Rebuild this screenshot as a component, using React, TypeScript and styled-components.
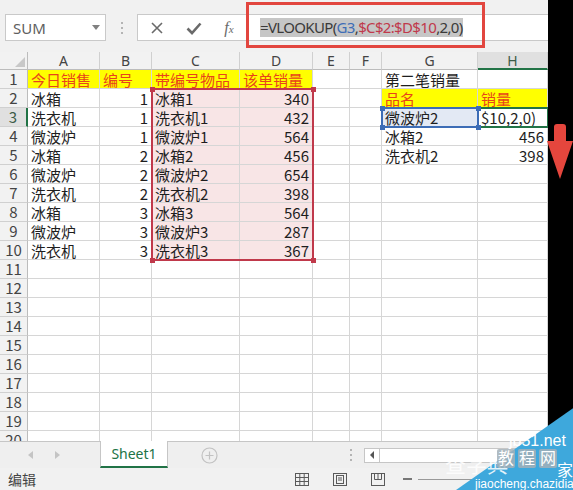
import React from "react";
import styled, { createGlobalStyle, css } from "styled-components";

const GREEN = "#217346";
const GRID = "#d6d6d6";
const RANGE_RED = "#c0394b";
const RANGE_BLUE = "#3d6db6";

const GlobalStyle = createGlobalStyle`
  html, body { margin: 0; padding: 0; }
  body {
    width: 573px;
    height: 490px;
    overflow: hidden;
    background: #fff;
    font-family: "Noto Sans CJK SC", sans-serif;
  }
`;

const Window = styled.div`
  position: relative;
  width: 573px;
  height: 490px;
  overflow: hidden;
  display: flex;
  flex-direction: column;
`;

/* ---------- formula bar ---------- */

const FormulaBar = styled.div`
  flex: none;
  height: 52px;
  box-sizing: border-box;
  padding: 14px 0 11px 5px;
  background: #f1f1f1;
  display: flex;
`;

const NameBox = styled.div`
  width: 101px;
  box-sizing: border-box;
  background: #fff;
  border: 1px solid #c9c9c9;
  display: flex;
  align-items: center;
  justify-content: space-between;
  padding: 0 5px 0 7px;
  font-family: "Noto Sans", sans-serif;
  font-size: 15px;
  color: #5f5f5f;
`;

const DropCaret = styled.span`
  width: 0;
  height: 0;
  border-left: 4px solid transparent;
  border-right: 4px solid transparent;
  border-top: 5px solid #808080;
`;

const Grip = styled.div`
  width: 31px;
  display: flex;
  flex-direction: column;
  align-items: center;
  justify-content: center;
  gap: 3px;

  span {
    width: 2px;
    height: 2px;
    background: #b4b4b4;
  }
`;

const FormulaBox = styled.div`
  flex: 1;
  background: #fff;
  border: 1px solid #c9c9c9;
  border-right: none;
  display: flex;
  align-items: center;
`;

const ToolButton = styled.div<{ $w: number }>`
  width: ${(p) => p.$w}px;
  height: 100%;
  display: flex;
  align-items: center;
  justify-content: center;
  color: #6a6a6a;
`;

const FxGlyph = styled.span`
  font-family: "Liberation Serif", serif;
  font-style: italic;
  font-size: 16px;
  color: #6a6a6a;

  small {
    font-size: 11px;
  }
`;

const FormulaText = styled.div`
  margin-left: 14px;
  font-family: "Noto Sans", sans-serif;
  font-size: 15px;
  line-height: 19px;
  white-space: nowrap;
  background: #c6c6c6;
  color: #3a3a3a;
  letter-spacing: -0.65px;
`;

const Ref = styled.span<{ $c: string }>`
  color: ${(p) => p.$c};
`;

const Annotation = styled.div`
  position: absolute;
  left: 246px;
  top: 2px;
  width: 239px;
  height: 46px;
  box-sizing: border-box;
  border: 3px solid #e2463f;
  pointer-events: none;
`;

/* ---------- sheet ---------- */

const Sheet = styled.div`
  position: relative;
  flex: 1;
  overflow: hidden;
`;

const Grid = styled.div`
  display: grid;
  grid-template-columns: 28px 72px 52px 88px 73px 37px 32px 96px 70px 1fr;
  grid-template-rows: 18px;
  grid-auto-rows: 19px;
`;

const Corner = styled.div`
  position: relative;
  background: #f2f2f2;
  border-right: 1px solid #bcbcbc;
  border-bottom: 1px solid #bcbcbc;

  &::after {
    content: "";
    position: absolute;
    right: 2px;
    bottom: 2px;
    border-left: 10px solid transparent;
    border-bottom: 10px solid #c8c8c8;
  }
`;

const ColHead = styled.div<{ $active?: boolean }>`
  box-sizing: border-box;
  background: ${(p) => (p.$active ? "#e0e0e0" : "#f2f2f2")};
  border-right: 1px solid #d0d0d0;
  border-bottom: ${(p) => (p.$active ? `2px solid ${GREEN}` : "1px solid #bcbcbc")};
  color: ${(p) => (p.$active ? "#3d5c48" : "#444")};
  font-family: "Noto Sans", sans-serif;
  font-size: 14px;
  line-height: 17px;
  text-align: center;
`;

const RowHead = styled.div<{ $active?: boolean }>`
  box-sizing: border-box;
  background: ${(p) => (p.$active ? "#e0e0e0" : "#f2f2f2")};
  border-right: ${(p) => (p.$active ? `2px solid ${GREEN}` : "1px solid #bcbcbc")};
  border-bottom: 1px solid #d0d0d0;
  color: ${(p) => (p.$active ? "#3d5c48" : "#444")};
  font-size: 15px;
  line-height: 18px;
  text-align: center;
`;

type Fill = "yellow" | "pink" | "blue";

const fills: Record<Fill, string> = {
  yellow: "#ffff00",
  pink: "#f8e5e6",
  blue: "#e3e9f4",
};

const Cell = styled.div<{ $right?: boolean; $fill?: Fill; $label?: boolean }>`
  box-sizing: border-box;
  border-right: 1px solid ${GRID};
  border-bottom: 1px solid ${GRID};
  padding: 0 3px;
  font-size: 15px;
  line-height: 19px;
  white-space: nowrap;
  overflow: hidden;
  color: ${(p) => (p.$label ? "#e8431a" : "#1e1e1e")};
  text-align: ${(p) => (p.$right ? "right" : "left")};
  ${(p) =>
    p.$fill &&
    css`
      background: ${fills[p.$fill]};
    `}
`;

const RangeBox = styled.div<{ $x: number; $y: number; $w: number; $h: number; $c: string }>`
  position: absolute;
  left: ${(p) => p.$x - 1}px;
  top: ${(p) => p.$y - 1}px;
  width: ${(p) => p.$w + 2}px;
  height: ${(p) => p.$h + 2}px;
  box-sizing: border-box;
  border: 2px solid ${(p) => p.$c};
`;

const Handle = styled.div<{ $x: number; $y: number; $c: string }>`
  position: absolute;
  left: ${(p) => p.$x - 2}px;
  top: ${(p) => p.$y - 2}px;
  width: 5px;
  height: 5px;
  background: ${(p) => p.$c};
`;

/* ---------- sheet tabs ---------- */

const TabBar = styled.div`
  flex: none;
  height: 27px;
  box-sizing: border-box;
  background: #efefef;
  border-top: 1px solid #c6c6c6;
  display: flex;
`;

const NavGroup = styled.div`
  width: 100px;
  display: flex;
  align-items: center;
  padding-left: 28px;
  gap: 22px;
  box-sizing: border-box;
`;

const NavArrow = styled.span<{ $dir: "left" | "right" }>`
  width: 0;
  height: 0;
  border-top: 4px solid transparent;
  border-bottom: 4px solid transparent;
  ${(p) =>
    p.$dir === "left"
      ? css`border-right: 5px solid #c4c4c4;`
      : css`border-left: 5px solid #c4c4c4;`}
`;

const SheetTab = styled.div`
  width: 68px;
  margin-top: -1px;
  box-sizing: border-box;
  background: #fff;
  border-left: 1px solid #c6c6c6;
  border-right: 1px solid #c6c6c6;
  border-bottom: 2px solid ${GREEN};
  display: flex;
  align-items: center;
  justify-content: center;
  font-family: "Noto Sans", sans-serif;
  font-size: 14px;
  color: ${GREEN};
`;

const AddSlot = styled.div`
  width: 82px;
  display: flex;
  align-items: center;
  justify-content: center;
`;

const ScrollZone = styled.div`
  flex: 1;
  display: flex;
  align-items: center;
  padding-left: 98px;
  gap: 10px;
`;

const VDots = styled(Grip)`
  width: 6px;
`;

const HScroll = styled.div`
  flex: 1;
  height: 15px;
  box-sizing: border-box;
  border: 1px solid #c6c6c6;
  background: #fff;
  display: flex;
`;

const ScrollBtn = styled.div`
  width: 14px;
  border-right: 1px solid #c6c6c6;
  display: flex;
  align-items: center;
  justify-content: center;

  &::before {
    content: "";
    border-top: 4px solid transparent;
    border-bottom: 4px solid transparent;
    border-right: 4px solid #555;
  }
`;

/* ---------- status bar ---------- */

const StatusBar = styled.div`
  flex: none;
  height: 22px;
  background: #f1f1f1;
  display: flex;
  align-items: center;
  padding-left: 8px;
`;

const StatusLabel = styled.span`
  width: 287px;
  font-size: 14px;
  color: #444;
`;

const ViewIcons = styled.div`
  display: flex;
  gap: 24px;
  color: #5a5a5a;
`;

const ZoomMinus = styled.span`
  margin-left: 18px;
  width: 9px;
  height: 2px;
  background: #777;
`;

const ZoomTrack = styled.span`
  margin-left: 6px;
  flex: 1;
  height: 1px;
  background: #999;
`;

/* ---------- screenshot overlays ---------- */

const BlackEdge = styled.div`
  position: absolute;
  right: 0;
  top: 0;
  width: 25px;
  height: 426px;
  background: #000;
`;

const Arrow = styled.svg`
  position: absolute;
  left: 546px;
  top: 123px;
`;

const Watermark = styled.div`
  position: absolute;
  left: 423px;
  top: 395px;
  width: 150px;
  height: 95px;
  z-index: 5;
`;

const MarkShape = styled.div`
  position: absolute;
  inset: 0;
  background: #3ea8dc;
  clip-path: polygon(100% 14%, 100% 100%, 22% 100%);
`;

const MarkSvg = styled.svg`
  position: absolute;
  inset: 0;
  overflow: visible;
`;

const MarkText = styled.text<{ $size: number; $latin?: boolean }>`
  font-family: ${(p) => (p.$latin ? `"Liberation Sans", sans-serif` : `"Noto Sans CJK SC", sans-serif`)};
  font-size: ${(p) => p.$size}px;
  fill: #ffffff;
`;

/* ---------- data ---------- */

type CellData = { t?: string; r?: boolean; fill?: Fill; label?: boolean };

const Y = (t: string): CellData => ({ t, fill: "yellow", label: true });
const P = (t: string, r = false): CellData => ({ t, r, fill: "pink" });
const N = (t: string): CellData => ({ t, r: true });
const T = (t: string): CellData => ({ t });
const E: CellData = {};

const sales: [string, string, string, string][] = [
  ["冰箱", "1", "冰箱1", "340"],
  ["洗衣机", "1", "洗衣机1", "432"],
  ["微波炉", "1", "微波炉1", "564"],
  ["冰箱", "2", "冰箱2", "456"],
  ["微波炉", "2", "微波炉2", "654"],
  ["洗衣机", "2", "洗衣机2", "398"],
  ["冰箱", "3", "冰箱3", "564"],
  ["微波炉", "3", "微波炉3", "287"],
  ["洗衣机", "3", "洗衣机3", "367"],
];

const lookup: CellData[][] = [
  [Y("品名"), Y("销量")],
  [{ t: "微波炉2", fill: "blue" }, T("$10,2,0)")],
  [T("冰箱2"), N("456")],
  [T("洗衣机2"), N("398")],
];

const rows: CellData[][] = [
  [Y("今日销售"), Y("编号"), Y("带编号物品"), Y("该单销量"), E, E, T("第二笔销量"), E, E],
  ...sales.map(([a, b, c, d], i) => [
    T(a),
    N(b),
    P(c),
    P(d, true),
    E,
    E,
    ...(lookup[i] ?? [E, E]),
    E,
  ]),
  ...Array.from({ length: 10 }, () => [E, E, E, E, E, E, E, E, E]),
];

const COLS = ["A", "B", "C", "D", "E", "F", "G", "H", ""];
const COL_X = [28, 100, 152, 240, 313, 350, 382, 478, 548];
const rowTop = (r: number) => 18 + (r - 1) * 19;

const corners = (x1: number, y1: number, x2: number, y2: number) => [
  [x1, y1],
  [x2, y1],
  [x1, y2],
  [x2, y2],
];

const CloseIcon = () => (
  <svg width="14" height="14" viewBox="0 0 14 14">
    <path d="M2 2 L12 12 M12 2 L2 12" stroke="currentColor" strokeWidth="1.6" />
  </svg>
);

const CheckIcon = () => (
  <svg width="16" height="14" viewBox="0 0 16 14">
    <path d="M1.5 7.5 L6 12 L14.5 2.5" stroke="currentColor" strokeWidth="2.6" fill="none" />
  </svg>
);

const AddIcon = () => (
  <svg width="17" height="17" viewBox="0 0 17 17">
    <circle cx="8.5" cy="8.5" r="7.5" stroke="#c2c2c2" strokeWidth="1.2" fill="none" />
    <path d="M8.5 4.5 V12.5 M4.5 8.5 H12.5" stroke="#c2c2c2" strokeWidth="1.2" />
  </svg>
);

const NormalView = () => (
  <svg width="14" height="13" viewBox="0 0 14 13">
    <rect x="0.5" y="0.5" width="13" height="12" fill="none" stroke="currentColor" />
    <path d="M0.5 4.5 H13.5 M0.5 8.5 H13.5 M4.8 0.5 V12.5 M9.2 0.5 V12.5" stroke="currentColor" />
  </svg>
);

const LayoutView = () => (
  <svg width="14" height="13" viewBox="0 0 14 13">
    <rect x="0.5" y="0.5" width="13" height="12" fill="none" stroke="currentColor" />
    <rect x="3.5" y="2.5" width="7" height="8" fill="none" stroke="currentColor" />
    <path d="M5 5 H9 M5 7 H9" stroke="currentColor" />
  </svg>
);

const BreakView = () => (
  <svg width="14" height="13" viewBox="0 0 14 13">
    <rect x="0.5" y="0.5" width="13" height="12" fill="none" stroke="currentColor" />
    <path d="M3.5 0.5 V6.5 H10.5 V0.5 M7 0.5 V6.5" stroke="currentColor" fill="none" />
  </svg>
);

export default function App() {
  const red = { x1: COL_X[2], y1: rowTop(2), x2: COL_X[4], y2: rowTop(11) };
  const blue = { x1: COL_X[6], y1: rowTop(3), x2: COL_X[7], y2: rowTop(4) };

  return (
    <Window>
      <GlobalStyle />

      <FormulaBar>
        <NameBox>
          SUM
          <DropCaret />
        </NameBox>
        <Grip>
          <span />
          <span />
          <span />
        </Grip>
        <FormulaBox>
          <ToolButton $w={38}>
            <CloseIcon />
          </ToolButton>
          <ToolButton $w={36}>
            <CheckIcon />
          </ToolButton>
          <ToolButton $w={34}>
            <FxGlyph>
              f<small>x</small>
            </FxGlyph>
          </ToolButton>
          <FormulaText>
            =VLOOKUP(<Ref $c={RANGE_BLUE}>G3</Ref>,<Ref $c={RANGE_RED}>$C$2:$D$10</Ref>,2,0)
          </FormulaText>
        </FormulaBox>
      </FormulaBar>

      <Sheet>
        <Grid>
          <Corner />
          {COLS.map((c, i) => (
            <ColHead key={c + i} $active={c === "H"}>
              {c}
            </ColHead>
          ))}
          {rows.map((row, r) => (
            <React.Fragment key={r}>
              <RowHead $active={r === 2}>{r + 1}</RowHead>
              {row.map((cell, c) => (
                <Cell key={c} $right={cell.r} $fill={cell.fill} $label={cell.label}>
                  {cell.t}
                </Cell>
              ))}
            </React.Fragment>
          ))}
        </Grid>

        <RangeBox
          $x={red.x1}
          $y={red.y1}
          $w={red.x2 - red.x1}
          $h={red.y2 - red.y1}
          $c={RANGE_RED}
        />
        {corners(red.x1, red.y1, red.x2, red.y2).map(([x, y], i) => (
          <Handle key={"r" + i} $x={x} $y={y} $c={RANGE_RED} />
        ))}

        <RangeBox
          $x={COL_X[7]}
          $y={blue.y1}
          $w={COL_X[8] - COL_X[7]}
          $h={19}
          $c={GREEN}
        />
        <RangeBox
          $x={blue.x1}
          $y={blue.y1}
          $w={blue.x2 - blue.x1}
          $h={blue.y2 - blue.y1}
          $c={RANGE_BLUE}
        />
        {corners(blue.x1, blue.y1, blue.x2, blue.y2).map(([x, y], i) => (
          <Handle key={"b" + i} $x={x} $y={y} $c={RANGE_BLUE} />
        ))}
      </Sheet>

      <TabBar>
        <NavGroup>
          <NavArrow $dir="left" />
          <NavArrow $dir="right" />
        </NavGroup>
        <SheetTab>Sheet1</SheetTab>
        <AddSlot>
          <AddIcon />
        </AddSlot>
        <ScrollZone>
          <VDots>
            <span />
            <span />
            <span />
          </VDots>
          <HScroll>
            <ScrollBtn />
          </HScroll>
        </ScrollZone>
      </TabBar>

      <StatusBar>
        <StatusLabel>编辑</StatusLabel>
        <ViewIcons>
          <NormalView />
          <LayoutView />
          <BreakView />
        </ViewIcons>
        <ZoomMinus />
        <ZoomTrack />
      </StatusBar>

      <Annotation />
      <BlackEdge />

      <Arrow width="27" height="57" viewBox="0 0 27 57">
        <path d="M8 4 Q8 1 11 1 H17 Q20 1 20 4 V18 H27 L14 56 L1 18 H8 Z" fill="#e5463d" />
      </Arrow>

      <Watermark>
        <MarkShape />
        <MarkSvg width="150" height="95" viewBox="0 0 150 95">
          <MarkText x="22" y="77" $size={21} opacity="0.85">
            查字典
          </MarkText>
          <MarkText x="86" y="51" $size={16} $latin>
            jb51.net
          </MarkText>
          <rect x="74" y="54" width="18" height="19" rx="2" fill="#a3b0b9" opacity="0.85" />
          <rect x="95" y="54" width="18" height="19" rx="2" fill="#a3b0b9" opacity="0.85" />
          <rect x="116" y="54" width="18" height="19" rx="2" fill="#a3b0b9" opacity="0.85" />
          <MarkText x="75" y="69" $size={16} letterSpacing="5">
            教程网
          </MarkText>
          <MarkText x="134" y="81" $size={16}>
            家
          </MarkText>
          <MarkText x="52" y="93" $size={12} $latin>
            jiaocheng.chazidian.com
          </MarkText>
        </MarkSvg>
      </Watermark>
    </Window>
  );
}
